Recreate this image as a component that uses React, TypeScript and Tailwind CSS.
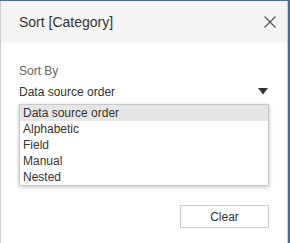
import React from "react";

export default function App() {
  const items = ["Data source order", "Alphabetic", "Field", "Manual", "Nested"];
  return (
    <div className="w-[290px] h-[243px] bg-[#4d6a8e] pt-px pr-[2px] overflow-hidden" style={{ fontFamily: '"Liberation Sans", Arial, sans-serif' }}>
      <div className="h-full bg-white border-l border-r border-[#cfcfcf] flex flex-col">
        <div className="h-[42px] bg-[#f5f5f5] flex items-center justify-between pl-[18px] pr-[10px] shrink-0">
          <span className="text-[14px] text-[#333]">Sort [Category]</span>
          <svg width="12" height="12" viewBox="0 0 12 12" className="mr-[1px]">
            <path d="M0.5 0.5 L11.5 11.5 M11.5 0.5 L0.5 11.5" stroke="#555" strokeWidth="1.2" fill="none" />
          </svg>
        </div>
        <div className="px-[18px] pt-[20px] flex flex-col">
          <div className="text-[12px] leading-[16px] text-[#666]">Sort By</div>
          <div className="relative mt-[5px]">
            <div className="h-[21px] border-b border-[#555] flex items-start justify-between">
              <span className="text-[12px] leading-[16px] text-[#333]">Data source order</span>
              <svg width="10" height="7" viewBox="0 0 10 7" className="mt-[4px] mr-[1px]">
                <path d="M0 0 L10 0 L5 6.5 Z" fill="#333" />
              </svg>
            </div>
            <div className="absolute left-0 right-0 top-[20px] bg-white border border-[#c8c8c8] shadow-[0_1px_4px_rgba(0,0,0,0.25)]">
              {items.map((it, i) => (
                <div
                  key={it}
                  className={
                    "h-[16px] leading-[16px] pl-[3px] text-[12px] text-[#333] " +
                    (i === 0 ? "bg-[#e6e6e6]" : "")
                  }
                >
                  {it}
                </div>
              ))}
            </div>
          </div>
          <div className="flex justify-end mt-[100px]">
            <button className="w-[89px] h-[23px] border border-[#cccccc] bg-white text-[12px] text-[#333]">Clear</button>
          </div>
        </div>
      </div>
    </div>
  );
}
